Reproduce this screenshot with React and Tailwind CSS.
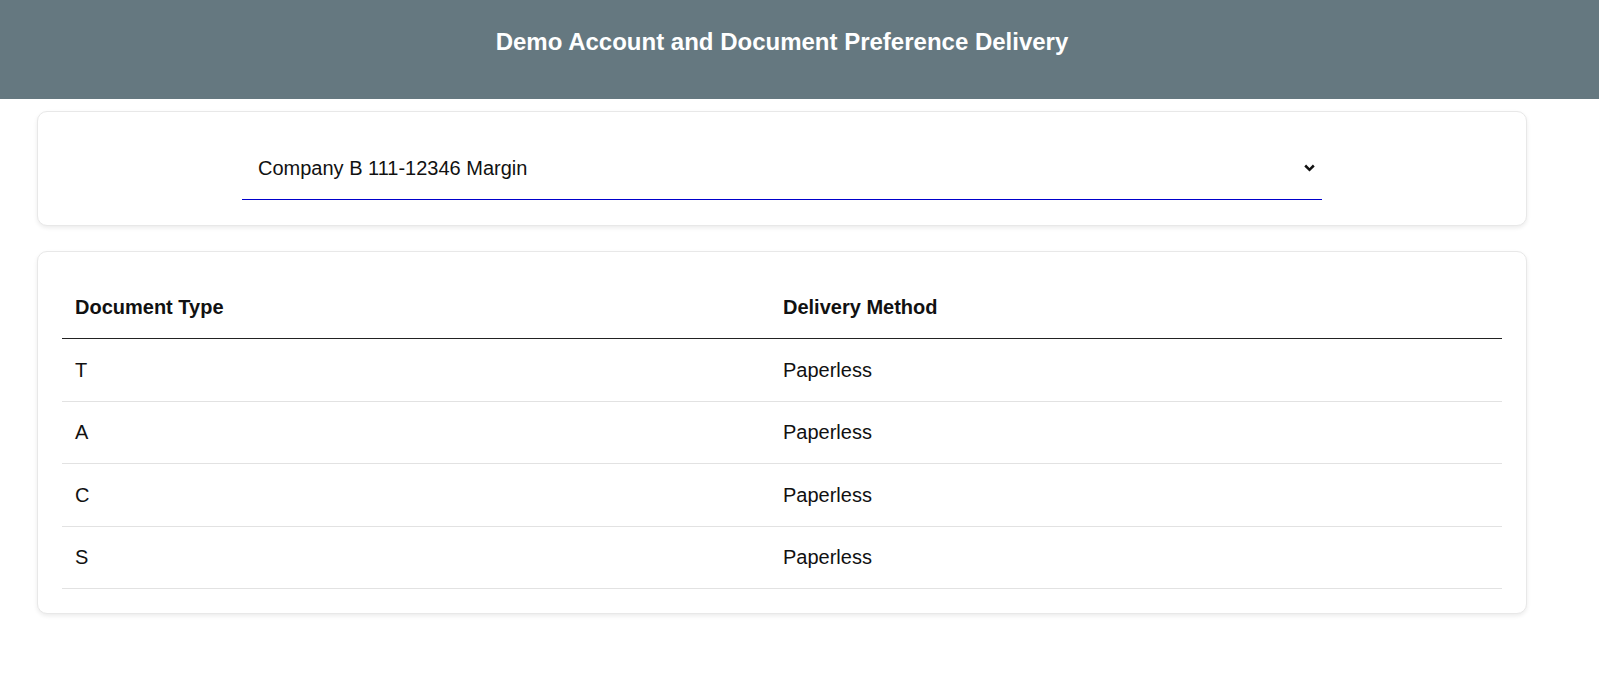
import React from 'react'

const rows = [
  { type: 'T', method: 'Paperless' },
  { type: 'A', method: 'Paperless' },
  { type: 'C', method: 'Paperless' },
  { type: 'S', method: 'Paperless' },
]

const Chevron = () => (
  <svg width="11" height="8" viewBox="0 0 11 8" className="block">
    <polyline points="1.2,1.5 5.5,5.8 9.8,1.5" fill="none" stroke="#111" strokeWidth="2.5" />
  </svg>
)

const App = () => {
  return (
    <div className="min-h-screen bg-white font-['Liberation_Sans',Arial,sans-serif] text-[#111]">
      <header className="h-[99px] w-full bg-[#657880]">
        <div className="w-[1564px] pt-[28px] text-center">
          <h1 className="text-[24px] font-bold leading-[28px] text-white">
            Demo Account and Document Preference Delivery
          </h1>
        </div>
      </header>

      <main className="w-[1564px] px-[37px]">
        <section className="mt-[12px] rounded-[10px] border border-[#e8e8e8] bg-white px-6 pt-6 pb-[25px] shadow-[0_2px_4px_rgba(0,0,0,0.08)]">
          <div className="mx-auto flex h-[64px] w-[1080px] items-center justify-between border-b border-[#0000cc] pl-[16px] pr-[7px]">
            <span className="text-[20px] leading-none">Company B 111-12346 Margin</span>
            <Chevron />
          </div>
        </section>

        <section className="mt-[25px] rounded-[10px] border border-[#e8e8e8] bg-white p-6 shadow-[0_2px_4px_rgba(0,0,0,0.08)]">
          <div className="grid grid-cols-[709px_1fr] border-b border-[#222] text-[20px] font-bold">
            <div className="flex h-[62px] items-center pl-[13px]">Document Type</div>
            <div className="flex h-[62px] items-center pl-[12px]">Delivery Method</div>
          </div>
          {rows.map((row) => (
            <div
              key={row.type}
              className="grid grid-cols-[709px_1fr] border-b border-[#e2e2e2] text-[20px]"
            >
              <div className="flex h-[61.5px] items-center pl-[13px]">{row.type}</div>
              <div className="flex h-[61.5px] items-center pl-[12px]">{row.method}</div>
            </div>
          ))}
        </section>
      </main>
    </div>
  )
}

export default App
